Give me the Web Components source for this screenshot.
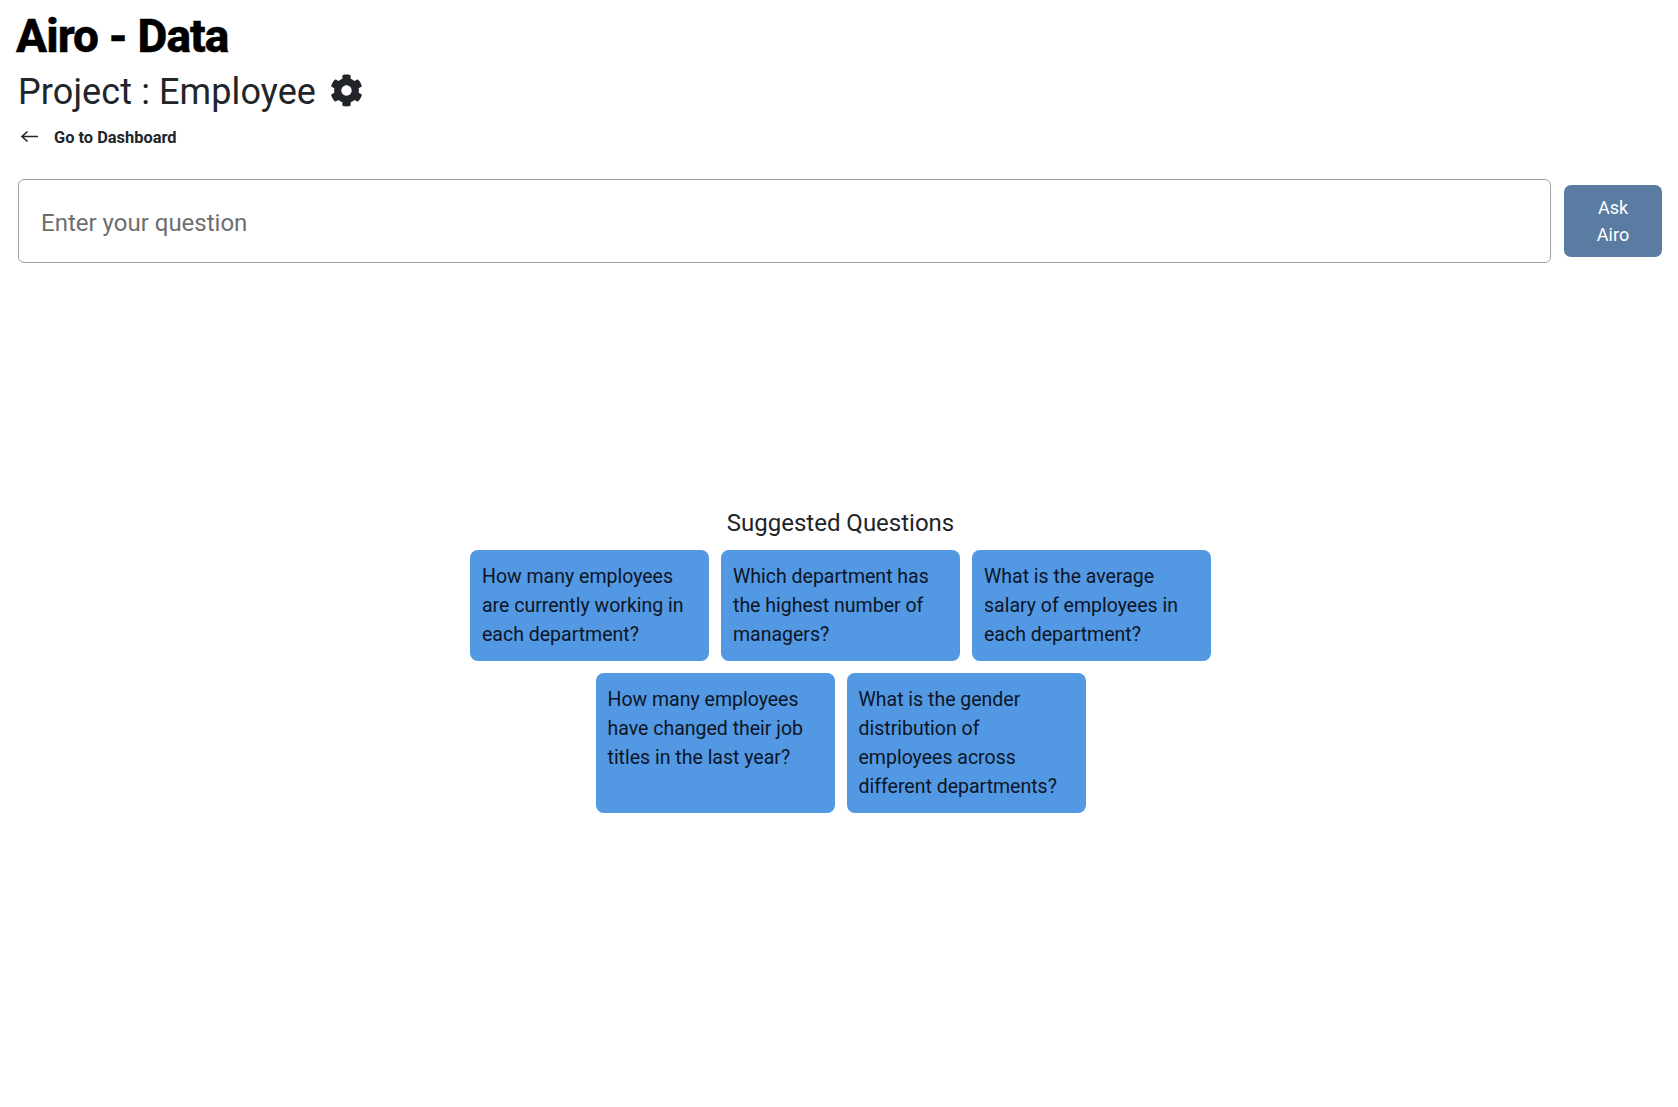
<!DOCTYPE html>
<html lang="en">
<head>
<meta charset="utf-8">
<title>Airo - Data</title>
<style>
    html, body { margin: 0; background: #fff; }
    body { font-family: Roboto, "Liberation Sans", sans-serif; color: #212529; }
</style>
</head>
<body>
<airo-page>
    <project-header slot="header" title="Airo - Data" project="Employee"></project-header>
    <ask-bar slot="ask"></ask-bar>
    <suggested-questions slot="suggest">
        <question-card>How many employees are currently working in each department?</question-card>
        <question-card>Which department has the highest number of managers?</question-card>
        <question-card>What is the average salary of employees in each department?</question-card>
        <question-card>How many employees have changed their job titles in the last year?</question-card>
        <question-card>What is the gender distribution of employees across different departments?</question-card>
    </suggested-questions>
</airo-page>

<script>
'use strict'

class AiroPage extends HTMLElement {
    constructor() {
        super()
        this.attachShadow({mode: 'open'}).innerHTML = /*html*/`
        <style>
            :host { display: block; min-height: 1107px; box-sizing: border-box; padding: 0 16px 0 18px; }
            .suggest { margin-top: 245px; padding-left: 1px; }
        </style>
        <slot name="header"></slot>
        <slot name="ask"></slot>
        <div class="suggest"><slot name="suggest"></slot></div>
        `
    }
}

class ProjectHeader extends HTMLElement {
    constructor() {
        super()
        this.attachShadow({mode: 'open'})
    }
    connectedCallback() {
        this.shadowRoot.innerHTML = /*html*/`
        <style>
            :host { display: block; }
            h1 { margin: 0 0 0 -2px; padding-top: 9px; font-size: 46px; line-height: 55px; font-weight: 800; letter-spacing: -.95px; color: #000; -webkit-text-stroke: .4px #000; }
            h2 { margin: 5px 0 0; display: flex; align-items: center; gap: 14px; font-size: 36px; line-height: 46px; font-weight: 400; letter-spacing: .1px; color: #212529; }
            h2 svg { width: 33px; height: 33px; fill: #212529; margin-top: -4px; }
            a { display: flex; align-items: center; gap: 15px; margin-top: 9px; height: 26px; font-size: 16.4px; font-weight: 700; color: #212529; text-decoration: none; }
            a svg { width: 20px; height: 20px; margin-left: 1px; }
        </style>
        <h1>${this.getAttribute('title')}</h1>
        <h2>Project : ${this.getAttribute('project')}
            <svg viewBox="0 0 512 512"><path d="M487.4 315.7l-42.6-24.6c4.3-23.2 4.3-47 0-70.2l42.6-24.6c4.9-2.8 7.1-8.6 5.5-14-11.1-35.6-30-67.8-54.7-94.6-3.8-4.1-10-5.1-14.8-2.3L380.8 110c-17.9-15.4-38.5-27.3-60.8-35.1V25.8c0-5.6-3.9-10.5-9.4-11.7-36.7-8.2-74.3-7.8-109.2 0-5.5 1.2-9.4 6.1-9.4 11.7V75c-22.2 7.9-42.8 19.8-60.8 35.1L88.7 85.5c-4.9-2.8-11-1.9-14.8 2.3-24.7 26.7-43.6 58.9-54.7 94.6-1.7 5.4.6 11.2 5.5 14L67.3 221c-4.3 23.2-4.3 47 0 70.2l-42.6 24.6c-4.9 2.8-7.1 8.6-5.5 14 11.1 35.6 30 67.8 54.7 94.6 3.8 4.1 10 5.1 14.8 2.3l42.6-24.6c17.9 15.4 38.5 27.3 60.8 35.1v49.2c0 5.6 3.9 10.5 9.4 11.7 36.7 8.2 74.3 7.8 109.2 0 5.5-1.2 9.4-6.1 9.4-11.7v-49.2c22.2-7.9 42.8-19.8 60.8-35.1l42.6 24.6c4.9 2.8 11 1.9 14.8-2.3 24.7-26.7 43.6-58.9 54.7-94.6 1.5-5.5-.7-11.3-5.6-14.1zM256 336c-44.1 0-80-35.9-80-80s35.9-80 80-80 80 35.9 80 80-35.9 80-80 80z"/></svg>
        </h2>
        <a href="#">
            <svg viewBox="0 0 20 20" fill="none" stroke="#212529" stroke-width="1.6"><path d="M19 9.5H3M8.5 4.5L3 9.5l5.5 5"/></svg>
            Go to Dashboard
        </a>
        `
    }
}

class AskBar extends HTMLElement {
    constructor() {
        super()
        this.attachShadow({mode: 'open'}).innerHTML = /*html*/`
        <style>
            :host { display: flex; align-items: center; gap: 13px; margin-top: 29px; }
            input {
                flex: 1; min-width: 0; height: 84px; box-sizing: border-box; padding: 3px 22px 0;
                border: 1px solid #a3a3a3; border-radius: 6px; outline: none;
                font: 400 24px Roboto, sans-serif; color: #212529;
            }
            input::placeholder { color: #6e6e6e; opacity: 1; }
            button {
                width: 98px; height: 72px; padding: 0 30px; border: 0; border-radius: 7px;
                background: #5a7ca3; color: #fff; font: 400 18px/27px Roboto, sans-serif;
            }
        </style>
        <input type="text" placeholder="Enter your question">
        <button>Ask Airo</button>
        `
    }
}

class SuggestedQuestions extends HTMLElement {
    constructor() {
        super()
        this.attachShadow({mode: 'open'}).innerHTML = /*html*/`
        <style>
            :host { display: block; width: 745px; margin: 0 auto; text-align: center; }
            h3 { margin: 0 0 12px; font-size: 24px; line-height: 30px; font-weight: 400; color: #212529; }
            .list { display: flex; flex-wrap: wrap; justify-content: center; gap: 12px; text-align: left; }
        </style>
        <h3>Suggested Questions</h3>
        <div class="list"><slot></slot></div>
        `
    }
}

class QuestionCard extends HTMLElement {
    constructor() {
        super()
        this.attachShadow({mode: 'open'}).innerHTML = /*html*/`
        <style>
            :host {
                display: block; width: 239px; box-sizing: border-box; padding: 12px;
                border-radius: 8px; background: #5298e3; color: #0d1526;
                font-size: 19.5px; line-height: 29px;
            }
        </style>
        <slot></slot>
        `
    }
}

customElements.define('airo-page', AiroPage)
customElements.define('project-header', ProjectHeader)
customElements.define('ask-bar', AskBar)
customElements.define('suggested-questions', SuggestedQuestions)
customElements.define('question-card', QuestionCard)
</script>
</body>
</html>
